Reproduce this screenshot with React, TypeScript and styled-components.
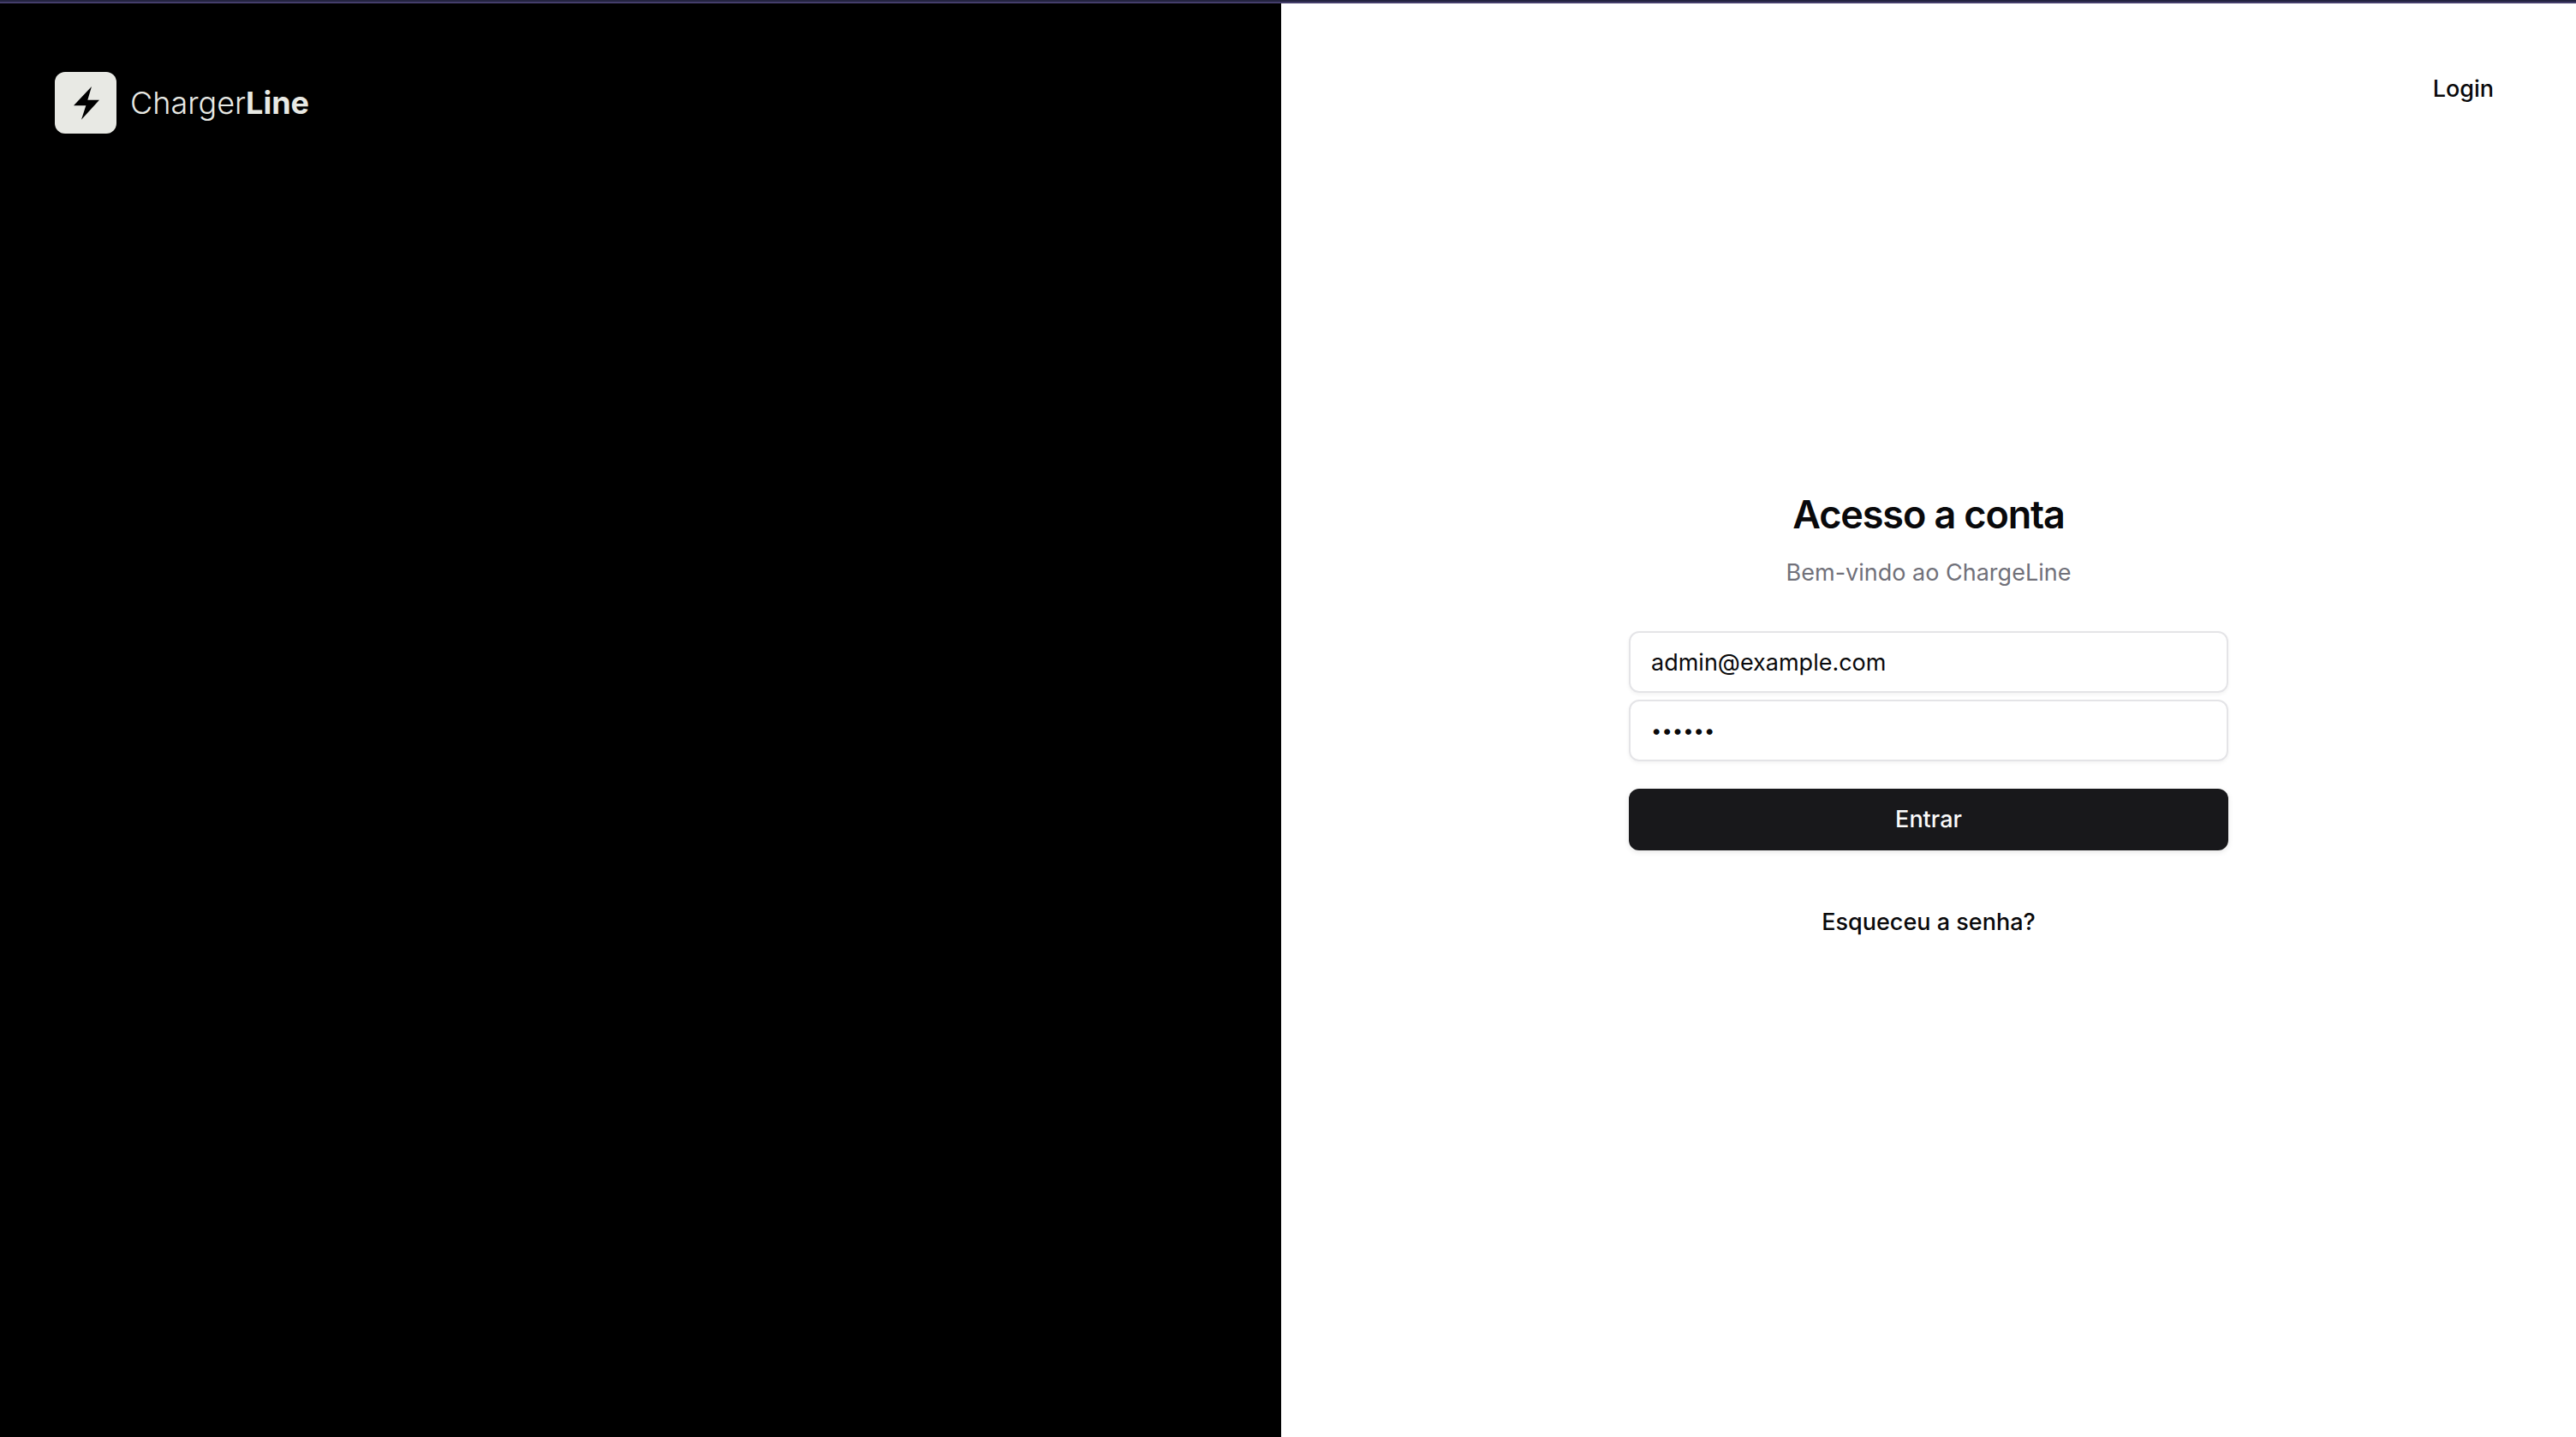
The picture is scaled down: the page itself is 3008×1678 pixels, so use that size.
import React from "react";
import styled, { createGlobalStyle } from "styled-components";

const GlobalStyle = createGlobalStyle`
  *, *::before, *::after { box-sizing: border-box; }
  body {
    margin: 0;
    background: #fff;
    color: #09090b;
    font-family: Inter, "Liberation Sans", sans-serif;
    font-size: 27px;
    line-height: 40px;
  }
`;

const Page = styled.div`
  min-height: 100vh;
  display: grid;
  grid-template-rows: 4px 1fr;
  grid-template-columns: calc(50% - 8px) 1fr;
`;

const TopBar = styled.div`
  grid-column: 1 / -1;
  background: linear-gradient(#23233f 50%, #443e6b 50%);
`;

const BrandPanel = styled.aside`
  padding: 80px 64px;
  background: #000;
`;

const Brand = styled.div`
  display: flex;
  align-items: center;
  gap: 16px;
  color: #e8e9e4;
  font-size: 36px;
  font-weight: 300;
`;

const BrandMark = styled.svg`
  width: 72px;
  height: 72px;
`;

const BrandStrong = styled.strong`
  font-weight: 700;
`;

const AccessPanel = styled.main`
  display: grid;
  grid-template-rows: 1fr auto 1fr;
  justify-items: center;
`;

const TopNav = styled.nav`
  justify-self: end;
  padding: 64px;
`;

const TextLink = styled.a`
  display: flex;
  align-items: center;
  height: 72px;
  padding: 0 32px;
  border-radius: 12px;
  color: inherit;
  font-weight: 500;
  text-decoration: none;
`;

const Access = styled.section`
  display: flex;
  flex-direction: column;
  align-items: center;
  gap: 48px;
  width: 700px;
  max-width: 100%;
`;

const Heading = styled.header`
  display: flex;
  flex-direction: column;
  gap: 16px;
  text-align: center;
`;

const Title = styled.h1`
  margin: 0;
  font-size: 45px;
  line-height: 64px;
  font-weight: 600;
  letter-spacing: -0.025em;
`;

const Subtitle = styled.p`
  margin: 0;
  color: #71717a;
`;

const Form = styled.form`
  display: flex;
  flex-direction: column;
  gap: 32px;
  width: 100%;
`;

const Fields = styled.div`
  display: flex;
  flex-direction: column;
  gap: 8px;
`;

const Field = styled.input`
  width: 100%;
  height: 72px;
  padding: 0 24px;
  border: 2px solid #e4e4e7;
  border-radius: 12px;
  background: transparent;
  color: inherit;
  font: inherit;
  outline: none;
  box-shadow: 0 2px 4px rgba(0, 0, 0, 0.05);

  &[type="password"] {
    font-size: 22px;
  }
`;

const Submit = styled.button`
  height: 72px;
  border: 0;
  border-radius: 12px;
  background: #18181b;
  color: #fafafa;
  font: inherit;
  font-weight: 500;
  box-shadow: 0 2px 6px rgba(0, 0, 0, 0.1);
`;

export default function App() {
  return (
    <>
      <GlobalStyle />
      <Page>
        <TopBar />
        <BrandPanel>
          <Brand>
            <BrandMark viewBox="0 0 216 216" aria-hidden="true">
              <rect width="216" height="216" rx="36" fill="#e8e9e4" />
              <path d="M129 51L66 118H109L93 167L156 98H115Z" fill="#000" />
            </BrandMark>
            <span>Charger<BrandStrong>Line</BrandStrong></span>
          </Brand>
        </BrandPanel>
        <AccessPanel>
          <TopNav>
            <TextLink href="#login">Login</TextLink>
          </TopNav>
          <Access>
            <Heading>
              <Title>Acesso a conta</Title>
              <Subtitle>Bem-vindo ao ChargeLine</Subtitle>
            </Heading>
            <Form onSubmit={(e) => e.preventDefault()}>
              <Fields>
                <Field type="email" aria-label="Email" defaultValue="admin@example.com" />
                <Field type="password" aria-label="Senha" defaultValue="secret" />
              </Fields>
              <Submit type="submit">Entrar</Submit>
            </Form>
            <TextLink href="#senha">Esqueceu a senha?</TextLink>
          </Access>
        </AccessPanel>
      </Page>
    </>
  );
}
